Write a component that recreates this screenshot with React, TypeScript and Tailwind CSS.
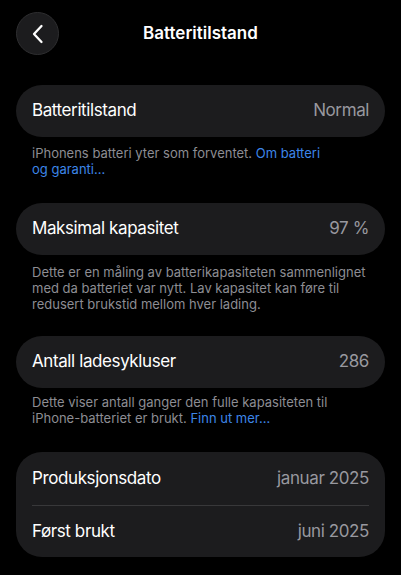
import React from "react";

function Card({ label, value }: { label: string; value: string }) {
  return (
    <div className="mx-4 h-[52px] rounded-full bg-[#1c1c1e] flex items-center justify-between px-4">
      <span className="text-[17px] tracking-[-0.4px] text-white">{label}</span>
      <span className="text-[17px] tracking-[-0.4px] text-[#98989f]">{value}</span>
    </div>
  );
}

export default function App() {
  return (
    <div
      className="w-[401px] h-[575px] bg-black overflow-hidden"
      style={{ fontFamily: "Inter, 'Noto Sans', sans-serif" }}
    >
      <div className="relative h-[68px] flex items-center justify-center">
        <button className="absolute left-4 top-3 w-[43px] h-[43px] rounded-full bg-[#1c1c1e] border border-[#2e2e30] flex items-center justify-center">
          <svg width="14" height="20" viewBox="0 0 14 20" fill="none">
            <path d="M10.5 2L3 10l7.5 8" stroke="white" strokeWidth="2.3" strokeLinecap="round" strokeLinejoin="round" />
          </svg>
        </button>
        <h1 className="text-[17px] font-semibold text-white">Batteritilstand</h1>
      </div>

      <div className="pt-[17px]">
        <Card label="Batteritilstand" value="Normal" />
        <p className="mx-8 mt-[8px] text-[13px] leading-[16px] text-[#8d8d93]">
          iPhonens batteri yter som forventet. <span className="text-[#3d86e8]">Om batteri<br />og garanti…</span>
        </p>
      </div>

      <div className="pt-[26px]">
        <Card label="Maksimal kapasitet" value="97 %" />
        <p className="mx-8 mt-[9px] text-[13px] leading-[16px] text-[#8d8d93]">
          Dette er en måling av batterikapasiteten sammenlignet<br />med da batteriet var nytt. Lav kapasitet kan føre til<br />redusert brukstid mellom hver lading.
        </p>
      </div>

      <div className="pt-[24px]">
        <Card label="Antall ladesykluser" value="286" />
        <p className="mx-8 mt-[6px] text-[13px] leading-[16px] text-[#8d8d93]">
          Dette viser antall ganger den fulle kapasiteten til<br />iPhone-batteriet er brukt. <span className="text-[#3d86e8]">Finn ut mer…</span>
        </p>
      </div>

      <div className="mt-[26px] mx-4 rounded-[26px] bg-[#1c1c1e] px-4">
        <div className="h-[53px] flex items-center justify-between">
          <span className="text-[17px] tracking-[-0.4px] text-white">Produksjonsdato</span>
          <span className="text-[17px] tracking-[-0.4px] text-[#98989f]">januar 2025</span>
        </div>
        <div className="h-px bg-[#38383a]" />
        <div className="h-[51px] flex items-center justify-between">
          <span className="text-[17px] tracking-[-0.4px] text-white">Først brukt</span>
          <span className="text-[17px] tracking-[-0.4px] text-[#98989f]">juni 2025</span>
        </div>
      </div>
    </div>
  );
}
